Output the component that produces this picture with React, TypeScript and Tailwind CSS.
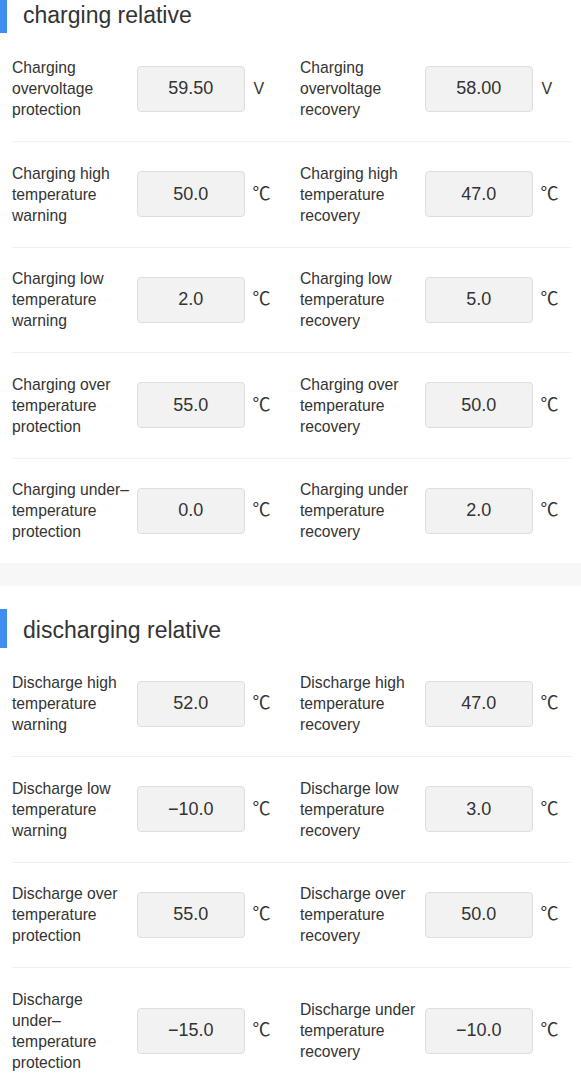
import React from 'react';

type Item = { label: string; value: string; unit: string };
type Row = [Item, Item];

const charging: Row[] = [
  [
    { label: 'Charging overvoltage protection', value: '59.50', unit: 'V' },
    { label: 'Charging overvoltage recovery', value: '58.00', unit: 'V' },
  ],
  [
    { label: 'Charging high temperature warning', value: '50.0', unit: '℃' },
    { label: 'Charging high temperature recovery', value: '47.0', unit: '℃' },
  ],
  [
    { label: 'Charging low temperature warning', value: '2.0', unit: '℃' },
    { label: 'Charging low temperature recovery', value: '5.0', unit: '℃' },
  ],
  [
    { label: 'Charging over temperature protection', value: '55.0', unit: '℃' },
    { label: 'Charging over temperature recovery', value: '50.0', unit: '℃' },
  ],
  [
    { label: 'Charging under–temperature protection', value: '0.0', unit: '℃' },
    { label: 'Charging under temperature recovery', value: '2.0', unit: '℃' },
  ],
];

const discharging: Row[] = [
  [
    { label: 'Discharge high temperature warning', value: '52.0', unit: '℃' },
    { label: 'Discharge high temperature recovery', value: '47.0', unit: '℃' },
  ],
  [
    { label: 'Discharge low temperature warning', value: '−10.0', unit: '℃' },
    { label: 'Discharge low temperature recovery', value: '3.0', unit: '℃' },
  ],
  [
    { label: 'Discharge over temperature protection', value: '55.0', unit: '℃' },
    { label: 'Discharge over temperature recovery', value: '50.0', unit: '℃' },
  ],
  [
    { label: 'Discharge under–temperature protection', value: '−15.0', unit: '℃' },
    { label: 'Discharge under temperature recovery', value: '−10.0', unit: '℃' },
  ],
];

function Field({ item }: { item: Item }) {
  return (
    <div className="flex items-center">
      <div className="w-[120px] shrink-0 text-[15.7px] leading-[21px] text-[#333]">{item.label}</div>
      <input
        readOnly
        value={item.value}
        className="ml-[5px] w-[107.5px] h-[46px] shrink-0 rounded-[4px] border border-[#dedede] bg-[#f2f2f2] text-center text-[18px] text-[#333] outline-none"
      />
      {item.unit === 'V' ? (
        <span className="ml-[9px] text-[16px] text-[#333]">V</span>
      ) : (
        <span className="ml-[8px] text-[18px] text-[#333]">℃</span>
      )}
    </div>
  );
}

function Section({ title, rows }: { title: string; rows: Row[] }) {
  return (
    <section className="bg-white">
      <div className="pt-[23px] pb-[3.5px]">
        <div className="flex items-center h-[39px]">
          <div className="w-[7px] h-full bg-[#3d8ef0]" />
          <h2 className="ml-[16px] mt-[4px] text-[23px] text-[#333] font-normal">{title}</h2>
        </div>
      </div>
      <div className="pl-[12px] pr-[10px]">
        {rows.map((row, i) => (
          <div
            key={i}
            className={
              'grid grid-cols-[288px_1fr] py-[20.75px] ' +
              (i < rows.length - 1 ? 'border-b border-[#f0f0f0]' : '')
            }
          >
            <Field item={row[0]} />
            <Field item={row[1]} />
          </div>
        ))}
      </div>
    </section>
  );
}

export default function App() {
  return (
    <div className="min-h-screen bg-white font-['Liberation_Sans','Noto_Sans_CJK_SC',sans-serif] overflow-hidden">
      <div className="-mt-[29px]">
        <Section title="charging relative" rows={charging} />
        <div className="h-[23px] bg-[#f7f7f7]" />
        <Section title="discharging relative" rows={discharging} />
      </div>
    </div>
  );
}
